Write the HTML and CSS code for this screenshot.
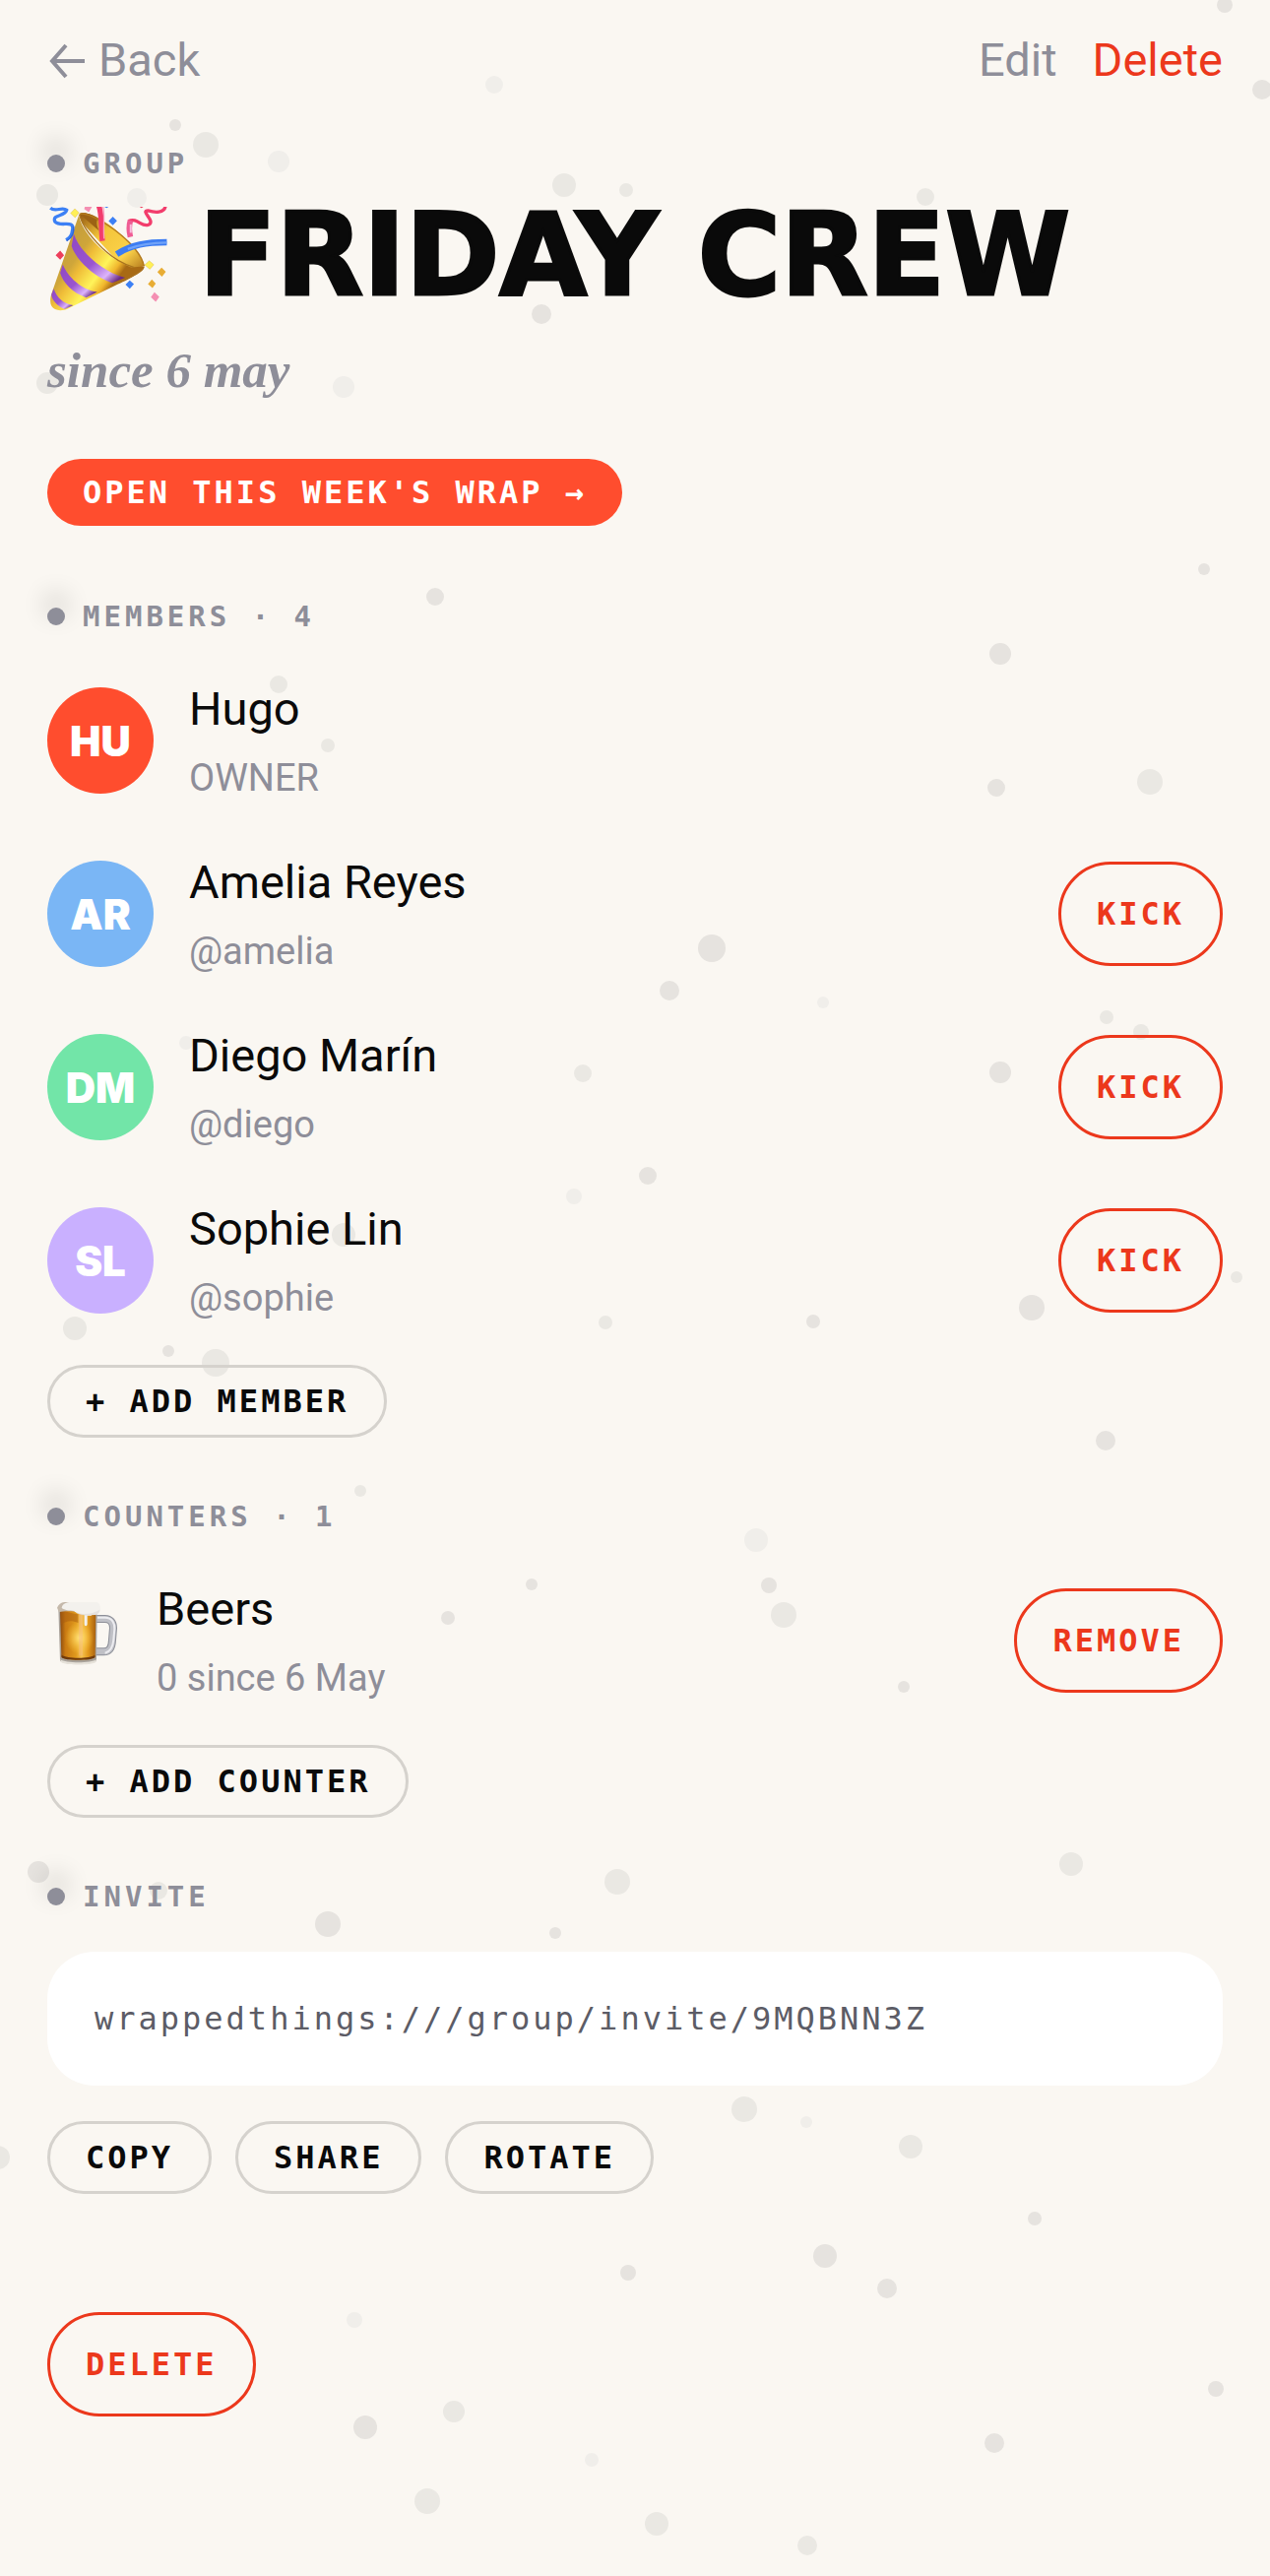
FILE: index.html
```html
<!DOCTYPE html>
<html lang="en">
<head>
    <meta charset="UTF-8">
    <meta name="viewport" content="width=device-width, initial-scale=1.0">
    <title>Friday Crew</title>

    <link rel="stylesheet" href="styles.css">
</head>
<body>
    <!-- Confetti behind the content -->
    <svg class="confetti" viewBox="0 0 1290 2616" preserveAspectRatio="xMidYMin slice" aria-hidden="true">
        <g class="dots-strong">
            <circle cx="1244" cy="5" r="8"/><circle cx="1282" cy="91" r="10"/>
            <circle cx="178" cy="127" r="6"/><circle cx="550" cy="319" r="10"/>
            <circle cx="442" cy="606" r="9"/><circle cx="1223" cy="578" r="6"/>
            <circle cx="1016" cy="664" r="11"/><circle cx="1012" cy="800" r="9"/>
            <circle cx="680" cy="1006" r="10"/><circle cx="723" cy="963" r="14"/>
            <circle cx="1016" cy="1089" r="11"/><circle cx="658" cy="1194" r="9"/>
            <circle cx="826" cy="1342" r="7"/><circle cx="1048" cy="1328" r="13"/>
            <circle cx="171" cy="1372" r="6"/><circle cx="1123" cy="1463" r="10"/>
            <circle cx="781" cy="1610" r="8"/><circle cx="540" cy="1609" r="6"/>
            <circle cx="455" cy="1643" r="7"/><circle cx="918" cy="1713" r="6"/>
            <circle cx="39" cy="1901" r="11"/><circle cx="333" cy="1954" r="13"/>
            <circle cx="564" cy="1963" r="6"/><circle cx="1051" cy="2253" r="7"/>
            <circle cx="838" cy="2291" r="12"/><circle cx="638" cy="2308" r="8"/>
            <circle cx="901" cy="2324" r="10"/><circle cx="1235" cy="2426" r="8"/>
            <circle cx="371" cy="2465" r="12"/><circle cx="1010" cy="2481" r="10"/>
        </g>
        <g class="dots-medium">
            <circle cx="209" cy="147" r="13"/><circle cx="48" cy="198" r="11"/>
            <circle cx="636" cy="193" r="7"/><circle cx="940" cy="200" r="9"/>
            <circle cx="48" cy="389" r="11"/><circle cx="573" cy="188" r="12"/>
            <circle cx="283" cy="695" r="9"/><circle cx="333" cy="757" r="7"/>
            <circle cx="1168" cy="794" r="13"/><circle cx="1124" cy="1033" r="7"/>
            <circle cx="1159" cy="1048" r="8"/><circle cx="592" cy="1090" r="9"/>
            <circle cx="349" cy="1254" r="12"/><circle cx="1256" cy="1297" r="6"/>
            <circle cx="76" cy="1349" r="12"/><circle cx="219" cy="1384" r="14"/>
            <circle cx="615" cy="1343" r="7"/><circle cx="366" cy="1514" r="6"/>
            <circle cx="796" cy="1640" r="13"/><circle cx="1088" cy="1893" r="12"/>
            <circle cx="161" cy="1920" r="9"/><circle cx="627" cy="1911" r="13"/>
            <circle cx="756" cy="2142" r="13"/><circle cx="925" cy="2180" r="12"/>
            <circle cx="-2" cy="2191" r="12"/><circle cx="461" cy="2449" r="11"/>
            <circle cx="434" cy="2540" r="13"/><circle cx="667" cy="2563" r="12"/>
            <circle cx="820" cy="2585" r="10"/>
        </g>
        <g class="dots-light">
            <circle cx="502" cy="86" r="9"/><circle cx="283" cy="164" r="11"/>
            <circle cx="139" cy="201" r="10"/><circle cx="349" cy="393" r="11"/>
            <circle cx="189" cy="1059" r="7"/><circle cx="836" cy="1018" r="6"/>
            <circle cx="583" cy="1215" r="8"/><circle cx="768" cy="1564" r="12"/>
            <circle cx="819" cy="2155" r="6"/><circle cx="360" cy="2356" r="8"/>
            <circle cx="601" cy="2498" r="7"/>
        </g>
    </svg>

    <div class="page">
        <nav class="topbar">
            <a class="back" href="#">
                <svg class="back-arrow" viewBox="0 0 40 40" aria-hidden="true"><path d="M38 22H5M19 6L5 22l14 16"/></svg>
                Back
            </a>
            <div class="topbar-actions">
                <a href="#">Edit</a>
                <a class="danger" href="#">Delete</a>
            </div>
        </nav>

        <header class="hero">
            <p class="label">GROUP</p>
            <div class="title-row">
                <svg class="popper" viewBox="54 60 366 321" role="img" aria-label="Party popper">
                    <defs>
                        <linearGradient id="cone" gradientUnits="userSpaceOnUse" x1="90" y1="210" x2="240" y2="320">
                            <stop offset="0" stop-color="#c79f3c"/>
                            <stop offset="0.25" stop-color="#cfa63a"/>
                            <stop offset="0.4" stop-color="#efbc38"/>
                            <stop offset="0.7" stop-color="#fff45a"/>
                            <stop offset="0.88" stop-color="#f0b52c"/>
                            <stop offset="1" stop-color="#a86a14"/>
                        </linearGradient>
                        <linearGradient id="stripe" x1="0" y1="0" x2="1" y2="1">
                            <stop offset="0" stop-color="#8f48c4"/>
                            <stop offset="0.5" stop-color="#9a55cf"/>
                            <stop offset="0.75" stop-color="#dcb4fb"/>
                            <stop offset="0.9" stop-color="#6b2c86"/>
                        </linearGradient>
                        <linearGradient id="mouth" x1="0" y1="0" x2="1" y2="1">
                            <stop offset="0" stop-color="#8f5410"/>
                            <stop offset="0.35" stop-color="#f3c53a"/>
                            <stop offset="0.7" stop-color="#fbd24a"/>
                            <stop offset="1" stop-color="#a96c16"/>
                        </linearGradient>
                    </defs>
                    <!-- cone -->
                    <path fill="url(#mouth)" d="M150 84C158 72 190 82 216 98C275 132 345 205 351 242L300 262L160 110Z"/>
                    <path fill="#9c6214" d="M152 82C162 74 195 84 208 96C202 104 204 118 212 134Z"/>
                    <path fill="url(#cone)" d="M150 84C152 122 210 205 310 246L351 243C348 256 310 280 270 298L120 371C96 384 74 379 66 366C60 356 61 340 66 326Z"/>
                    <path fill="#a9701c" d="M351 243C336 262 300 278 262 292L246 306L300 282C330 268 352 256 351 243Z"/>
                    <path fill="url(#stripe)" d="M134 143C150 194 216 258 292 278L252 294C200 278 140 224 127 180Z"/>
                    <path fill="url(#stripe)" d="M100 237C116 276 156 314 206 322L172 339C130 326 100 292 92 264Z"/>
                    <path fill="url(#stripe)" d="M72 312C82 340 102 358 132 363L106 375C84 366 66 346 65 330Z"/>
                    <path fill="none" stroke="#a9741e" stroke-width="4" d="M152 84C158 122 230 220 318 246"/>
                    <path fill="none" stroke="#b47a1c" stroke-width="4" d="M152 82C190 72 335 170 350 242"/>
                    <!-- streamers -->
                    <path fill="none" stroke="#f23d6c" stroke-width="16" d="M210 54C222 84 216 118 222 165"/>
                    <path fill="none" stroke="#f9a0bf" stroke-width="4" d="M224 60C230 90 224 120 227 158"/>
                    <path fill="none" stroke="#3c80f5" stroke-width="10" d="M62 64C78 78 98 58 112 70C106 92 66 82 76 106C92 124 136 98 130 130C128 150 120 156 110 162"/>
                    <path fill="none" stroke="#2c66dc" stroke-width="4" d="M133 120C136 144 124 158 112 165"/>
                    <path fill="none" stroke="#f23d6c" stroke-width="10" d="M302 104C330 92 340 122 362 116C390 106 336 72 362 72C384 78 412 80 416 58"/>
                    <path fill="none" stroke="#ef5c93" stroke-width="17" d="M308 153C304 136 303 118 308 102"/>
                    <path fill="none" stroke="#f8bfe0" stroke-width="6" d="M309 140V114"/>
                    <path fill="none" stroke="#3c7cf2" stroke-width="19" d="M266 206C310 176 360 169 420 169"/>
                    <path fill="none" stroke="#6fa2f8" stroke-width="7" d="M300 190C340 174 380 170 420 170"/>
                    <!-- confetti pieces -->
                    <path fill="#fff056" stroke="#cfa63a" stroke-width="1" d="M137 66l13 12-12 15-14-13zM366 226l14 12-12 14-16-13z"/>
                    <path fill="#e8ad34" d="M404 247l13 13-12 15-14-14zM374 283l12 13-10 14-14-12z"/>
                    <path fill="#3c80f5" d="M254 90l13 13-13 14-13-13zM306 286l13 12-13 14-13-13zM228 60h13l-6 4z"/>
                    <path fill="#ed3f5c" d="M92 195l12 14-12 14-14-14zM336 60h12l-6 4z"/>
                    <path fill="#f48fb2" d="M168 60h22l-10 17-14-10zM382 323l15 14-11 15-15-14z"/>
                </svg>
                <h1>FRIDAY CREW</h1>
            </div>
            <p class="since">since 6 may</p>
            <a class="btn btn-primary" href="#">OPEN THIS WEEK'S WRAP →</a>
        </header>

        <section>
            <h2 class="label">MEMBERS · 4</h2>
            <ul class="rows">
                <li class="row">
                    <span class="avatar avatar-red">HU</span>
                    <div class="row-text">
                        <p class="name">Hugo</p>
                        <p class="sub">OWNER</p>
                    </div>
                </li>
                <li class="row">
                    <span class="avatar avatar-blue">AR</span>
                    <div class="row-text">
                        <p class="name">Amelia Reyes</p>
                        <p class="sub">@amelia</p>
                    </div>
                    <button class="btn btn-danger" type="button">KICK</button>
                </li>
                <li class="row">
                    <span class="avatar avatar-green">DM</span>
                    <div class="row-text">
                        <p class="name">Diego Marín</p>
                        <p class="sub">@diego</p>
                    </div>
                    <button class="btn btn-danger" type="button">KICK</button>
                </li>
                <li class="row">
                    <span class="avatar avatar-purple">SL</span>
                    <div class="row-text">
                        <p class="name">Sophie Lin</p>
                        <p class="sub">@sophie</p>
                    </div>
                    <button class="btn btn-danger" type="button">KICK</button>
                </li>
            </ul>
            <button class="btn btn-outline" type="button">+ ADD MEMBER</button>
        </section>

        <section>
            <h2 class="label">COUNTERS · 1</h2>
            <ul class="rows">
                <li class="row">
                    <svg class="beer" viewBox="24 81 225 234" role="img" aria-label="Beer mug">
                        <defs>
                            <linearGradient id="ale" x1="0" y1="0" x2="1" y2="0">
                                <stop offset="0" stop-color="#8a4a10"/>
                                <stop offset="0.15" stop-color="#c97a12"/>
                                <stop offset="0.45" stop-color="#e09a1e"/>
                                <stop offset="0.6" stop-color="#f6c452"/>
                                <stop offset="0.78" stop-color="#e39a1c"/>
                                <stop offset="1" stop-color="#a8600f"/>
                            </linearGradient>
                            <radialGradient id="glow">
                                <stop offset="0" stop-color="#ffe27a"/>
                                <stop offset="1" stop-color="#ffc83c" stop-opacity="0"/>
                            </radialGradient>
                        </defs>
                        <path fill="none" stroke="#8d8f98" stroke-width="24" d="M174 132H196C217 130 225 144 225 160L222 196C221 220 214 232 196 232H174"/>
                        <path fill="none" stroke="#bfc0c6" stroke-width="18" d="M174 132H196C217 130 225 144 225 160L222 196C221 220 214 232 196 232H174"/>
                        <path fill="none" stroke="#ececf0" stroke-width="6" d="M176 128H200C222 128 230 146 229 162L226 196C224 216 216 232 200 236"/>
                        <path fill="#a9a29a" d="M58 100H176L174 258C172 274 64 274 63 258Z"/>
                        <path fill="url(#ale)" d="M63 104H172L170 248C160 260 76 260 67 248Z"/>
                        <ellipse cx="122" cy="190" rx="44" ry="50" fill="url(#glow)"/>
                        <path fill="#a85c10" opacity="0.5" d="M64 104C84 112 104 116 118 118V144C100 136 80 136 66 150Z"/>
                        <path fill="#f5b98a" opacity="0.4" d="M120 112H132V244H120Z"/>
                        <path fill="#6f3a0c" d="M68 242C84 254 154 254 169 242V250C160 260 76 260 68 250Z"/>
                        <path fill="#e6e2da" d="M64 256C80 268 158 268 174 256L172 264C160 274 78 274 66 264Z"/>
                        <path fill="#c5b9aa" d="M54 98C58 88 66 82 76 81H110V110C90 108 72 108 60 112Z"/>
                        <path fill="#f3f1ed" d="M68 98C70 86 84 81 96 81H176C190 88 188 114 178 118C170 122 162 118 158 122H146V148C146 156 137 156 137 148V120C122 118 110 114 106 108C92 106 76 106 68 98Z"/>
                        <path fill="#dcd9d5" opacity="0.6" d="M110 110C130 122 160 118 184 104C184 116 172 122 158 120C140 124 118 120 110 110Z"/>
                    </svg>
                    <div class="row-text">
                        <p class="name">Beers</p>
                        <p class="sub">0 since 6 May</p>
                    </div>
                    <button class="btn btn-danger" type="button">REMOVE</button>
                </li>
            </ul>
            <button class="btn btn-outline" type="button">+ ADD COUNTER</button>
        </section>

        <section>
            <h2 class="label">INVITE</h2>
            <p class="invite-link">wrappedthings:///group/invite/9MQBNN3Z</p>
            <div class="invite-actions">
                <button class="btn btn-outline" type="button">COPY</button>
                <button class="btn btn-outline" type="button">SHARE</button>
                <button class="btn btn-outline" type="button">ROTATE</button>
            </div>
        </section>

        <footer>
            <button class="btn btn-danger" type="button">DELETE</button>
        </footer>
    </div>
</body>
</html>
```
FILE: styles.css
```css
* {
    box-sizing: border-box;
}

body {
    margin: 0;
    min-height: 100vh;
    position: relative;
    overflow-x: hidden;
    background: #faf7f2;
    color: #0a0a0a;
    font-family: Roboto, sans-serif;
    font-size: 47px;
}

h1, h2, p, ul {
    margin: 0;
    padding: 0;
}

a {
    color: inherit;
    text-decoration: none;
}

/* Confetti */
.confetti {
    position: absolute;
    top: 0;
    left: 0;
    width: 100%;
    height: 100%;
}

.dots-strong {
    fill: #e6e3df;
}

.dots-medium {
    fill: #eae8e3;
}

.dots-light {
    fill: #f0eeea;
}

.page {
    position: relative;
    padding: 0 48px 120px;
}

/* Top bar */
.topbar {
    display: flex;
    justify-content: space-between;
    align-items: center;
    height: 120px;
    color: #8e8e99;
}

.back {
    display: flex;
    align-items: center;
    gap: 12px;
}

.back-arrow {
    width: 40px;
    height: 40px;
    fill: none;
    stroke: currentColor;
    stroke-width: 4;
}

.topbar-actions {
    display: flex;
    gap: 36px;
}

.danger {
    color: #ec381c;
}

/* Section labels */
.label {
    display: flex;
    align-items: center;
    gap: 18px;
    color: #8e8e99;
    font-family: "DejaVu Sans Mono", monospace;
    font-size: 29px;
    font-weight: bold;
    line-height: 36px;
    letter-spacing: 4px;
}

.label::before {
    content: "";
    width: 18px;
    height: 18px;
    border-radius: 50%;
    background: #8e8e99;
    box-shadow: 0 -12px 24px 4px rgba(10, 10, 10, 0.12);
}

/* Hero */
.hero {
    padding: 28px 0 12px;
}

.title-row {
    display: flex;
    align-items: flex-start;
    gap: 32px;
    margin-top: 26px;
}

.popper {
    flex-shrink: 0;
    width: 122px;
    height: 106px;
}

h1 {
    font-family: "DejaVu Sans", sans-serif;
    font-size: 115px;
    font-weight: bold;
    line-height: 98px;
    -webkit-text-stroke: 3px #0a0a0a;
}

.since {
    margin: 24px 0 54px;
    color: #8e8e99;
    font-family: "Liberation Serif", serif;
    font-size: 51px;
    font-style: italic;
    font-weight: bold;
    line-height: 72px;
}

/* Buttons */
.btn {
    display: block;
    width: fit-content;
    padding: 16px 36px;
    border: 0 solid;
    border-radius: 36px;
    background: none;
    font-family: "DejaVu Sans Mono", monospace;
    font-size: 32px;
    font-weight: bold;
    line-height: 36px;
    letter-spacing: 3px;
    white-space: nowrap;
    cursor: pointer;
}

.btn-primary {
    background: #ff4d2e;
    color: #fff;
}

.btn-outline {
    border: 3px solid #d5d2cd;
    border-radius: 37px;
    color: #0a0a0a;
}

.btn-danger {
    padding: 32px 36px;
    border: 3px solid #ec381c;
    border-radius: 53px;
    color: #ec381c;
}

/* Rows */
section {
    margin-top: 62px;
}

.rows {
    margin: 20px 0 18px;
    list-style: none;
}

.row {
    display: flex;
    align-items: center;
    gap: 36px;
    height: 176px;
}

.row-text {
    flex: 1;
}

.name {
    line-height: 72px;
}

.sub {
    margin-top: 5px;
    color: #8e8e99;
    font-size: 38px;
    line-height: 59px;
}

.avatar {
    display: flex;
    align-items: center;
    justify-content: center;
    width: 108px;
    height: 108px;
    border-radius: 50%;
    color: #fff;
    font-family: Inter, sans-serif;
    font-size: 42px;
    font-weight: 900;
}

.avatar-red {
    background: #ff4d2e;
}

.avatar-blue {
    background: #7ab6f5;
}

.avatar-green {
    background: #72e5a8;
}

.avatar-purple {
    background: #c9b0ff;
}

.beer {
    width: 75px;
    height: 78px;
}

/* Invite */
.invite-link {
    margin: 38px 0 36px;
    padding: 48px;
    border-radius: 48px;
    background: #fff;
    color: #5c5c66;
    font-family: "DejaVu Sans Mono", monospace;
    font-size: 32px;
    line-height: 40px;
    letter-spacing: 3px;
    overflow-wrap: anywhere;
}

.invite-actions {
    display: flex;
    flex-wrap: wrap;
    gap: 24px;
}

footer {
    margin-top: 120px;
}
```
